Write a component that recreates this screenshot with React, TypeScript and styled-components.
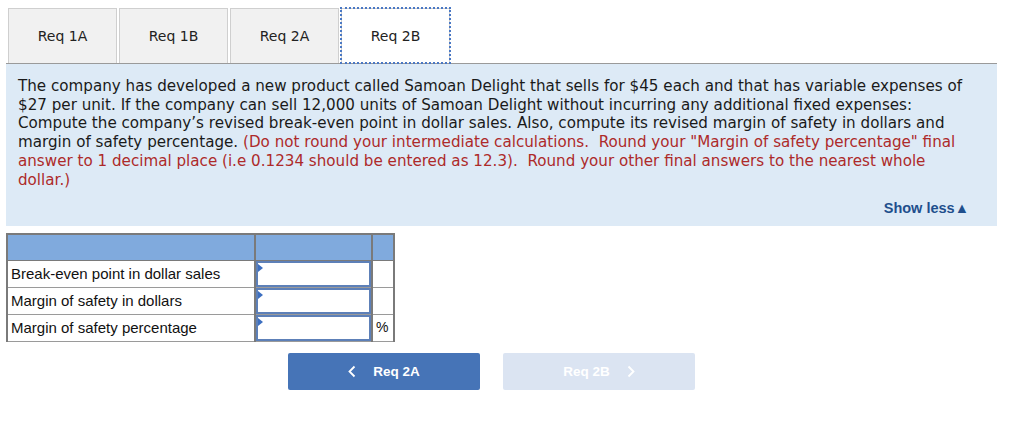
import React, { useState } from 'react';
import styled, { createGlobalStyle } from 'styled-components';

const GlobalStyle = createGlobalStyle`
    body {
        margin: 0;
        background: #ffffff;
        font-family: 'DejaVu Sans', Verdana, sans-serif;
    }
`;

const Page = styled.div`
    width: 991px;
    padding: 8px 0 0 6px;
`;

const TabBar = styled.div`
    display: flex;
    gap: 2px;
    margin-left: 2px;
`;

const Tab = styled.button<{ $active?: boolean }>`
    box-sizing: border-box;
    width: 109px;
    height: 55px;
    margin: 0;
    padding: 0;
    border: 1px solid #cfcfcf;
    border-bottom: none;
    background: ${p => (p.$active ? '#ffffff' : '#f1f1f1')};
    outline: ${p => (p.$active ? '2px dotted #4a78c4' : 'none')};
    outline-offset: -1px;
    font-family: 'DejaVu Sans', Verdana, sans-serif;
    font-size: 14px;
    color: #222;
    cursor: pointer;
`;

const Panel = styled.div`
    box-sizing: border-box;
    height: 163px;
    border-top: 1px solid #9a9a9a;
    background: #ddeaf6;
    padding: 13px 28px 0 12px;
    display: flex;
    flex-direction: column;
`;

const Question = styled.p`
    margin: 0;
    font-size: 15.15px;
    line-height: 18.7px;
    color: #1a1a1a;
`;

const Note = styled.span`
    color: #ad2a2a;
`;

const ShowLess = styled.button`
    align-self: flex-end;
    margin-top: 11px;
    padding: 0;
    border: none;
    background: none;
    font-family: 'Liberation Sans', Arial, sans-serif;
    font-weight: bold;
    font-size: 14.5px;
    color: #1f4f8d;
    cursor: pointer;
`;

const Grid = styled.table`
    margin-top: 7px;
    border-collapse: collapse;
    font-family: 'Liberation Sans', Arial, sans-serif;
    font-size: 15px;
    color: #111;
`;

const HeadCell = styled.td<{ $w: number }>`
    width: ${p => p.$w}px;
    height: 25px;
    padding: 0;
    background: #80aadd;
    border: 2px solid #7a7a7a;
    border-bottom-width: 1px;
`;

const LabelCell = styled.td`
    height: 24px;
    padding: 0 0 2px 3px;
    border: 1px solid #9a9a9a;
    border-left: 2px solid #7a7a7a;
    border-right: 2px solid #7a7a7a;
    white-space: nowrap;
`;

const InputCell = styled.td`
    position: relative;
    padding: 0;
    border: 1px solid #9a9a9a;
    border-left: 2px solid #7a7a7a;
    border-right: 2px solid #7a7a7a;
`;

const AmountInput = styled.input`
    box-sizing: border-box;
    display: block;
    width: 100%;
    height: 26px;
    margin: 0;
    border: 2px solid #5d80b8;
    background: #fff;
`;

const Flag = styled.span`
    position: absolute;
    top: 3px;
    left: 2px;
    width: 0;
    height: 0;
    border-top: 4px solid transparent;
    border-bottom: 4px solid transparent;
    border-left: 5px solid #3d6fc0;
`;

const UnitCell = styled.td`
    padding: 0 0 2px 3px;
    border: 1px solid #9a9a9a;
    border-right: 2px solid #7a7a7a;
    font-size: 14px;
`;

const Nav = styled.div`
    display: flex;
    gap: 23px;
    margin: 11px 0 0 282px;
`;

const NavButton = styled.button<{ $disabled?: boolean }>`
    display: flex;
    align-items: center;
    justify-content: center;
    gap: 17px;
    width: 192px;
    height: 37px;
    border: none;
    border-radius: 2px;
    background: ${p => (p.$disabled ? '#dbe4f2' : '#4674b7')};
    color: #fff;
    font-family: 'Liberation Sans', Arial, sans-serif;
    font-weight: bold;
    font-size: 13.5px;
    cursor: ${p => (p.$disabled ? 'default' : 'pointer')};
`;

const Chevron = ({ dir }: { dir: 'left' | 'right' }) => (
    <svg width="8" height="13" viewBox="0 0 8 13">
        <path
            d={dir === 'left' ? 'M6.5 1.5L1.5 6.5L6.5 11.5' : 'M1.5 1.5L6.5 6.5L1.5 11.5'}
            fill="none"
            stroke="#fff"
            strokeWidth="1.8"
        />
    </svg>
);

const rows = [
    { label: 'Break-even point in dollar sales', unit: '' },
    { label: 'Margin of safety in dollars', unit: '' },
    { label: 'Margin of safety percentage', unit: '%' },
];

export default function App() {
    const [tab, setTab] = useState('Req 2B');

    return (
        <Page>
            <GlobalStyle />
            <TabBar>
                {['Req 1A', 'Req 1B', 'Req 2A', 'Req 2B'].map(t => (
                    <Tab key={t} $active={t === tab} onClick={() => setTab(t)}>{t}</Tab>
                ))}
            </TabBar>
            <Panel>
                <Question>
                    The company has developed a new product called Samoan Delight that sells for $45 each and that has variable expenses of
                    $27 per unit. If the company can sell 12,000 units of Samoan Delight without incurring any additional fixed expenses:
                    Compute the company’s revised break-even point in dollar sales. Also, compute its revised margin of safety in dollars and
                    margin of safety percentage.{' '}
                    <Note>
                        (Do not round your intermediate calculations.{'\u00a0 '}Round your "Margin of safety percentage" final
                        answer to 1 decimal place (i.e 0.1234 should be entered as 12.3).{'\u00a0 '}Round your other final answers to the nearest whole
                        dollar.)
                    </Note>
                </Question>
                <ShowLess>Show less▲</ShowLess>
            </Panel>
            <Grid>
                <tbody>
                    <tr>
                        <HeadCell $w={246} />
                        <HeadCell $w={115} />
                        <HeadCell $w={20} />
                    </tr>
                    {rows.map(r => (
                        <tr key={r.label}>
                            <LabelCell>{r.label}</LabelCell>
                            <InputCell>
                                <AmountInput />
                                <Flag />
                            </InputCell>
                            <UnitCell>{r.unit}</UnitCell>
                        </tr>
                    ))}
                </tbody>
            </Grid>
            <Nav>
                <NavButton>
                    <Chevron dir="left" />
                    Req 2A
                </NavButton>
                <NavButton $disabled>
                    Req 2B
                    <Chevron dir="right" />
                </NavButton>
            </Nav>
        </Page>
    );
}
